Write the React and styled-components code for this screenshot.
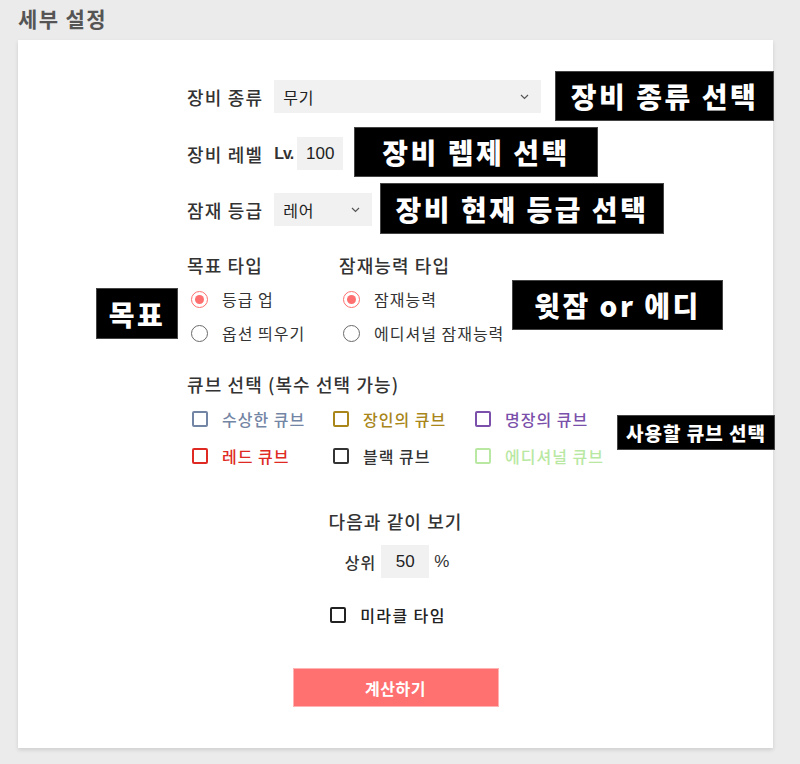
import React from 'react';
import styled, { createGlobalStyle, css } from 'styled-components';

const GlobalStyle = createGlobalStyle`
  html, body {
    margin: 0;
    padding: 0;
    background: #ebebeb;
  }
  body {
    font-family: "Noto Sans CJK KR", "Noto Sans", sans-serif;
    color: #333;
  }
`;

const Page = styled.div`
  width: 800px;
  height: 764px;
  background: #ebebeb;
  overflow: hidden;
`;

const Title = styled.h2`
  margin: 0;
  padding-left: 18px;
  height: 36px;
  line-height: 36px;
  font-size: 21px;
  font-weight: 700;
  letter-spacing: 1.4px;
  color: #555;
`;

const Card = styled.div`
  position: relative;
  margin: 4px 0 0 18px;
  width: 755px;
  height: 708px;
  box-sizing: border-box;
  padding-top: 40px;
  background: #fff;
  box-shadow: 0 2px 4px rgba(0, 0, 0, 0.12);
`;

const Form = styled.div`
  width: 417px;
  margin: 0 auto;
  display: flex;
  flex-direction: column;
`;

const Row = styled.div`
  display: flex;
  align-items: center;
  height: 33px;
  gap: 11px;
  margin-bottom: ${p => p.mb || 0}px;
`;

const Label = styled.span`
  font-size: 18px;
  font-weight: 500;
  letter-spacing: 1.2px;
  color: #333;
  white-space: nowrap;
`;

const Lv = styled.span`
  font-family: "Liberation Sans", Arial, sans-serif;
  font-size: 16px;
  font-weight: 700;
  letter-spacing: -1px;
  margin-right: -7px;
`;

const Field = styled.div`
  display: flex;
  align-items: center;
  justify-content: ${p => (p.center ? 'center' : 'space-between')};
  width: ${p => p.w}px;
  height: 33px;
  box-sizing: border-box;
  padding: 0 ${p => (p.center ? 0 : 12)}px 0 ${p => (p.center ? 0 : 9)}px;
  background: #f1f1f1;
  font-size: 16px;
  letter-spacing: 0.8px;
  color: #222;
  ${p => p.num && css`
    font-family: "Liberation Sans", Arial, sans-serif;
    font-size: 17px;
    letter-spacing: 0;
  `}
`;

const Chevron = () => (
  <svg width="9" height="6" viewBox="0 0 9 6">
    <path d="M1 1l3.5 3.5L8 1" fill="none" stroke="#555" strokeWidth="1.2" />
  </svg>
);

const Select = ({ w, value }) => (
  <Field w={w}>
    <span>{value}</span>
    <Chevron />
  </Field>
);

const Groups = styled.div`
  display: flex;
  margin-top: 26px;
`;

const Group = styled.div`
  width: ${p => p.w}px;
  display: flex;
  flex-direction: column;
`;

const Heading = styled.div`
  font-size: 18px;
  font-weight: 500;
  line-height: 26px;
  letter-spacing: 1.1px;
  color: #333;
  margin-top: ${p => p.mt || 0}px;
  margin-bottom: ${p => p.mb || 0}px;
  text-align: ${p => (p.center ? 'center' : 'left')};
`;

const Option = styled.div`
  display: flex;
  align-items: center;
  height: 34px;
  font-size: 16px;
  letter-spacing: 1px;
  color: #333;
`;

const RadioDot = styled.span`
  width: 17px;
  height: 17px;
  box-sizing: border-box;
  border-radius: 50%;
  margin: 0 14px 0 4px;
  border: 1.8px solid ${p => (p.on ? '#ff6f6f' : '#6a6a6a')};
  display: flex;
  align-items: center;
  justify-content: center;
  &::after {
    content: '';
    width: 9px;
    height: 9px;
    border-radius: 50%;
    background: ${p => (p.on ? '#ff6f6f' : 'transparent')};
  }
`;

const Radio = ({ on, children }) => (
  <Option>
    <RadioDot on={on} />
    {children}
  </Option>
);

const CubeGrid = styled.div`
  display: grid;
  grid-template-columns: 141px 142px 134px;
  grid-auto-rows: 37px;
  margin-top: 3px;
`;

const Box = styled.span`
  width: 16px;
  height: 16px;
  box-sizing: border-box;
  border: 2px solid ${p => p.c};
  border-radius: 2px;
  margin: 0 14px 0 5px;
  flex: none;
`;

const Cube = styled.div`
  display: flex;
  align-items: center;
  font-size: 16px;
  font-weight: 500;
  letter-spacing: 1px;
  white-space: nowrap;
  color: ${p => p.c};
`;

const Center = styled.div`
  display: flex;
  flex-direction: column;
  align-items: center;
  margin-top: 34px;
`;

const TopRow = styled.div`
  display: flex;
  align-items: center;
  gap: 5px;
  margin-top: 11px;
  margin-left: 4px;
  font-size: 16px;
  font-weight: 500;
  letter-spacing: 1px;
`;

const Percent = styled.span`
  font-family: "Liberation Sans", Arial, sans-serif;
  font-size: 17px;
`;

const Miracle = styled.div`
  display: flex;
  align-items: center;
  height: 24px;
  margin-top: 25px;
  margin-right: 20px;
  font-size: 16px;
  font-weight: 500;
  letter-spacing: 1.4px;
  color: #222;
`;

const Button = styled.button`
  margin-top: 41px;
  width: 206px;
  height: 39px;
  background: #ff7070;
  border: 1px solid #ffb3b3;
  color: #fff;
  font-family: "Noto Sans CJK KR", sans-serif;
  font-size: 16px;
  font-weight: 700;
  letter-spacing: 0.5px;
`;

const Note = styled.div`
  position: absolute;
  left: ${p => p.x}px;
  top: ${p => p.y}px;
  width: ${p => p.w}px;
  height: ${p => p.h}px;
  box-sizing: border-box;
  border: 1px solid #444;
  background: #000;
  color: #fff;
  display: flex;
  align-items: center;
  justify-content: center;
  font-size: ${p => p.fs || 28}px;
  font-weight: 900;
  letter-spacing: ${p => p.ls ?? 2.5}px;
  white-space: nowrap;
`;

const cubes = [
  { name: '수상한 큐브', c: '#7385a4' },
  { name: '장인의 큐브', c: '#a8861a' },
  { name: '명장의 큐브', c: '#7a50aa' },
  { name: '레드 큐브', c: '#de2a22' },
  { name: '블랙 큐브', c: '#333333' },
  { name: '에디셔널 큐브', c: '#b8e8a2' },
];

export default function App() {
  return (
    <Page>
      <GlobalStyle />
      <Title>세부 설정</Title>
      <Card>
        <Form>
          <Row mb={24}>
            <Label>장비 종류</Label>
            <Select w={267} value="무기" />
          </Row>
          <Row mb={23}>
            <Label>장비 레벨</Label>
            <Lv>Lv.</Lv>
            <Field w={46} center num>100</Field>
          </Row>
          <Row>
            <Label>잠재 등급</Label>
            <Select w={98} value="레어" />
          </Row>

          <Groups>
            <Group w={152}>
              <Heading mb={4}>목표 타입</Heading>
              <Radio on>등급 업</Radio>
              <Radio>옵션 띄우기</Radio>
            </Group>
            <Group w={220}>
              <Heading mb={4}>잠재능력 타입</Heading>
              <Radio on>잠재능력</Radio>
              <Radio>에디셔널 잠재능력</Radio>
            </Group>
          </Groups>

          <Heading mt={21}>큐브 선택 (복수 선택 가능)</Heading>
          <CubeGrid>
            {cubes.map(cube => (
              <Cube key={cube.name} c={cube.c}>
                <Box c={cube.c} />
                {cube.name}
              </Cube>
            ))}
          </CubeGrid>
        </Form>

        <Center>
          <Heading center>다음과 같이 보기</Heading>
          <TopRow>
            <span>상위</span>
            <Field w={48} center num>50</Field>
            <Percent>%</Percent>
          </TopRow>
          <Miracle>
            <Box c="#222" />
            미라클 타임
          </Miracle>
          <Button>계산하기</Button>
        </Center>

        <Note x={537} y={31} w={219} h={50}>장비 종류 선택</Note>
        <Note x={336} y={87} w={244} h={50}>장비 렙제 선택</Note>
        <Note x={362} y={143} w={284} h={51}>장비 현재 등급 선택</Note>
        <Note x={78} y={248} w={82} h={51}>목표</Note>
        <Note x={494} y={240} w={211} h={50}>윗잠 or 에디</Note>
        <Note x={599} y={375} w={158} h={35} fs={19} ls={1}>사용할 큐브 선택</Note>
      </Card>
    </Page>
  );
}
